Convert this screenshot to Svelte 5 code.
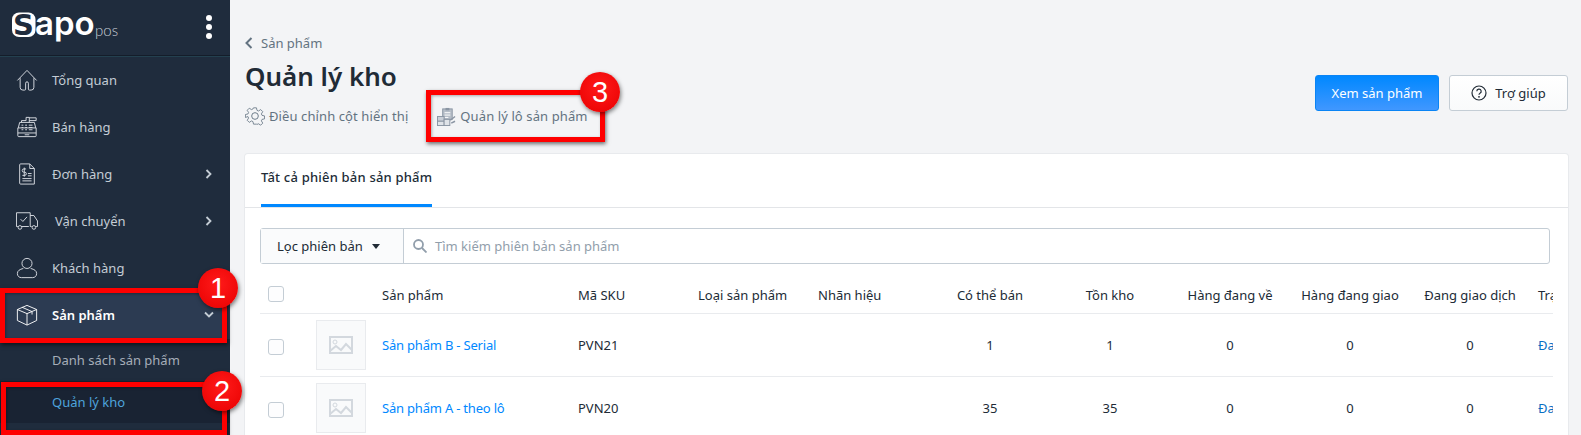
<script>
  const navItems = [
    { label: 'Tổng quan', icon: 'home' },
    { label: 'Bán hàng', icon: 'register' },
    { label: 'Đơn hàng', icon: 'order', arrow: true },
    { label: 'Vận chuyển', icon: 'truck', arrow: true, wide: true },
    { label: 'Khách hàng', icon: 'user' }
  ];
  const columns = ['Có thể bán', 'Tồn kho', 'Hàng đang về', 'Hàng đang giao', 'Đang giao dịch'];
  const rows = [
    { name: 'Sản phẩm B - Serial', sku: 'PVN21', nums: [1, 1, 0, 0, 0] },
    { name: 'Sản phẩm A - theo lô', sku: 'PVN20', nums: [35, 35, 0, 0, 0] }
  ];
</script>

<div class="page">
  <aside class="sidebar">
    <div class="brand">
      <svg class="logo" width="125" height="44" viewBox="0 0 125 44">
        <rect x="12" y="12.500" width="23.500" height="24.500" rx="7" fill="#fff" />
        <text x="23.500" y="35" class="logo-s" text-anchor="middle">S</text>
        <text x="35" y="35" class="logo-apo">apo</text>
        <text x="95" y="36" class="logo-pos">pos</text>
      </svg>
      <div class="dots"><i></i><i></i><i></i></div>
    </div>
    <nav>
      {#each navItems as item}
        <div class="nav-item">
          <svg class="nav-icon" width="24" height="24" viewBox="0 0 24 24">
            {#if item.icon === 'home'}
              <path d="M1.500 12.500 12 1.500l10.500 11M4.500 10v10a3 3 0 0 0 3 3h2a1 1 0 0 0 1-1v-6.500a1.500 1.500 0 0 1 3 0V22a1 1 0 0 0 1 1h2a3 3 0 0 0 3-3V10" />
            {:else if item.icon === 'register'}
              <path d="M2.500 13 4 7h16l1.500 6M2 13h20v8.500a1 1 0 0 1-1 1H3a1 1 0 0 1-1-1zM2 18.500h20M9.500 20.500h5M6 7V5h5V1.500h3.500V7M14.500 2H22v3h-7.500" />
              <path d="M6 10h2M10 10h2M14 10h4M6 12.500h2M10 12.500h2M14 12.500h4M6 15h2M10 15h2M14 15h4" />
            {:else if item.icon === 'order'}
              <path d="M5 1h10l5 5v17H5a1 1 0 0 1-1-1V2a1 1 0 0 1 1-1zM15 1v5h5" />
              <path d="M11 6.500H8.500a1.500 1.500 0 0 0 0 3.500h1a1.500 1.500 0 0 1 0 3.500H7M9 5v10M13 11.500h4M13 14h4M7 17h10M7 19.500h10" />
            {:else if item.icon === 'truck'}
              <path d="M14 18H6.500M2 18H.5V3h15v15M15.500 6h4l4 6v6H22M15.500 18h1.500" />
              <path d="M5 10l2.500 2.500L12 7.500" />
              <circle cx="4.300" cy="19" r="2" /><circle cx="19.500" cy="19" r="2" />
            {:else}
              <circle cx="12" cy="7" r="5.500" />
              <path d="M8 12.500c-4 1-6.500 2.500-6.500 5.500 0 3 2 4.500 4.500 4.500h12c2.500 0 4.500-1.500 4.500-4.500 0-3-2.500-4.500-6.500-5.500" />
            {/if}
          </svg>
          <span class="nav-label" class:wide={item.wide}>{item.label}</span>
          {#if item.arrow}
            <svg class="chevron" width="8" height="10" viewBox="0 0 8 10"><path d="M1.500 1l4 4-4 4" /></svg>
          {/if}
        </div>
      {/each}
      <div class="nav-item active">
        <svg class="nav-icon" width="24" height="24" viewBox="0 0 24 24">
          <path d="M12 1.500 22.500 6v12L12 23 1.500 18V6zM1.500 6 12 10.500 22.500 6M12 10.500V23M6.500 3.500 17.500 8.300v3.200" />
        </svg>
        <span class="nav-label">Sản phẩm</span>
        <svg class="chevron" width="10" height="8" viewBox="0 0 10 8"><path d="M1 1.500l4 4 4-4" /></svg>
      </div>
      <div class="sub-item">Danh sách sản phẩm</div>
      <div class="sub-item current">Quản lý kho</div>
    </nav>
  </aside>

  <main>
    <div class="back">
      <svg width="8" height="12" viewBox="0 0 8 12"><path d="M6.500 1 1.500 6l5 5" /></svg>
      <span>Sản phẩm</span>
    </div>
    <div class="head">
      <div>
        <h1>Quản lý kho</h1>
        <div class="actions">
          <span class="action">
            <svg class="gear" width="20" height="20" viewBox="0 0 24 24">
              <circle cx="12" cy="12" r="4" />
              <path d="M10 1h4l.7 3.400 2 .9 3-1.900 2.800 2.800-1.900 3 .9 2 3.400.7v4l-3.400.7-.9 2 1.900 3-2.800 2.800-3-1.900-2 .9L14 23h-4l-.7-3.400-2-.9-3 1.900-2.800-2.800 1.900-3-.9-2L-.9 14v-4l3.400-.7.9-2-1.900-3L4.300 1.500l3 1.900 2-.9z" transform="translate(1.300 1.300) scale(.89)" />
            </svg>
            Điều chỉnh cột hiển thị
          </span>
          <span class="action lot">
            <svg width="19" height="19" viewBox="0 0 20 20">
              <rect x="6" y="2" width="10" height="11" fill="#b6bec8" stroke="#8a95a3" />
              <rect x="9" y="1" width="4" height="2.500" fill="#8a95a3" />
              <path d="M8 6h6M8 8.500h6M8 11h4" stroke="#fff" />
              <rect x=".5" y="10" width="7" height="5" fill="#c9cfd7" stroke="#8a95a3" />
              <rect x=".5" y="15" width="7" height="4.500" fill="#dfe3e8" stroke="#8a95a3" />
              <rect x="7.500" y="13" width="6" height="6.500" fill="#dfe3e8" stroke="#8a95a3" />
              <path d="M14 14l5-4M15 17l4-2" stroke="#8a95a3" stroke-width="1.500" />
            </svg>
            Quản lý lô sản phẩm
          </span>
        </div>
      </div>
      <div class="buttons">
        <button class="primary">Xem sản phẩm</button>
        <button class="help">
          <svg width="16" height="16" viewBox="0 0 16 16">
            <circle cx="8" cy="8" r="7" />
            <path d="M5.800 6.200A2.200 2.200 0 1 1 9 8.200c-.7.400-1 .8-1 1.500" />
            <circle class="dot" cx="8" cy="11.800" r=".9" />
          </svg>
          Trợ giúp
        </button>
      </div>
    </div>

    <section class="card">
      <div class="tabs"><span class="tab">Tất cả phiên bản sản phẩm</span></div>
      <div class="body">
        <div class="filter">
          <div class="filter-btn">Lọc phiên bản <i class="caret"></i></div>
          <div class="search">
            <svg width="14" height="14" viewBox="0 0 14 14"><circle cx="5.500" cy="5.500" r="4.500" /><path d="m9 9 4.500 4.500" /></svg>
            <span>Tìm kiếm phiên bản sản phẩm</span>
          </div>
        </div>
        <div class="table">
          <div class="row header">
            <span class="check"></span>
            <span></span>
            <span>Sản phẩm</span>
            <span>Mã SKU</span>
            <span>Loại sản phẩm</span>
            <span>Nhãn hiệu</span>
            {#each columns as col}<span class="num">{col}</span>{/each}
            <span class="status">Trạng thái</span>
          </div>
          {#each rows as row}
            <div class="row">
              <span class="check"></span>
              <span class="thumb">
                <svg width="24" height="18" viewBox="0 0 24 18">
                  <path d="M1 1h22v16H1z" />
                  <circle cx="6" cy="6" r="2" />
                  <path d="M1 15l6-5 5 4 5-6 6 6" />
                </svg>
              </span>
              <span class="link">{row.name}</span>
              <span>{row.sku}</span>
              <span></span>
              <span></span>
              {#each row.nums as n}<span class="num">{n}</span>{/each}
              <span class="status link2">Đang giao dịch</span>
            </div>
          {/each}
        </div>
      </div>
    </section>
  </main>

  <div class="mark m1"></div>
  <div class="mark m2"></div>
  <div class="mark m3"></div>
  <div class="badge b1">1</div>
  <div class="badge b2">2</div>
  <div class="badge b3">3</div>
</div>

<style>
  :global(body) {
    margin: 0;
  }
  .page {
    position: relative;
    display: flex;
    width: 1581px;
    height: 435px;
    overflow: hidden;
    background: #f3f4f6;
    font-family: "Noto Sans", sans-serif;
    font-size: 13px;
    color: #212b36;
  }
  .sidebar {
    width: 230px;
    flex: none;
    background: #1f2c3d;
  }
  .brand {
    position: relative;
    height: 55px;
    border-bottom: 1px solid #141d2a;
    box-shadow: 0 1px 0 #23404f;
  }
  .logo {
    display: block;
  }
  .logo-s {
    font: 700 29px "DejaVu Sans", sans-serif;
    fill: #1f2c3d;
  }
  .logo-apo {
    font: 600 33px "Inter", sans-serif;
    fill: #fff;
  }
  .logo-pos {
    font: 300 15px "Lato", sans-serif;
    fill: #c9ced6;
  }
  .dots {
    position: absolute;
    top: 15px;
    left: 206px;
    display: flex;
    flex-direction: column;
    gap: 3px;
  }
  .dots i {
    width: 6px;
    height: 6px;
    border-radius: 50%;
    background: #fff;
  }
  .nav-item {
    display: flex;
    align-items: center;
    height: 47px;
    padding-left: 16px;
    color: #c4cdd5;
    position: relative;
  }
  .nav-icon {
    width: 22px;
    height: 22px;
    flex: none;
  }
  .nav-icon path, .nav-icon circle {
    fill: none;
    stroke: #dfe3e8;
    stroke-width: 1;
  }
  .nav-label {
    margin-left: 14px;
  }
  .nav-label.wide {
    margin-left: 17px;
  }
  .chevron {
    position: absolute;
    left: 205px;
    top: 19px;
  }
  .chevron path {
    fill: none;
    stroke: #c4cdd5;
    stroke-width: 1.800;
  }
  .active {
    height: 48px;
    background: #2c3b52;
    color: #fff;
    font-weight: 600;
  }
  .active .nav-icon path {
    stroke: #fff;
  }
  .active .chevron {
    left: 204px;
    top: 20px;
  }
  .sub-item {
    height: 42px;
    line-height: 42px;
    padding-left: 52px;
    color: #a6aeb9;
  }
  .sub-item.current {
    color: #4ea3dc;
    background: #192333;
  }
  main {
    flex: 1;
    min-width: 0;
    padding: 34px 13px 0 15px;
  }
  .back {
    display: flex;
    align-items: center;
    gap: 8px;
    height: 18px;
    color: #637381;
  }
  .back svg path {
    fill: none;
    stroke: #637381;
    stroke-width: 2;
  }
  .head {
    display: flex;
    justify-content: space-between;
    align-items: flex-start;
    margin-top: 1px;
  }
  h1 {
    margin: 0;
    height: 48px;
    line-height: 46px;
    font-size: 26px;
    font-weight: 600;
    color: #212b36;
  }
  .actions {
    display: flex;
    align-items: center;
    height: 30px;
    color: #637381;
  }
  .action {
    display: flex;
    align-items: center;
    gap: 4px;
    letter-spacing: .1px;
  }
  .gear circle, .gear path {
    fill: none;
    stroke: #637381;
    stroke-width: 1.100;
  }
  .lot {
    margin-left: 29px;
  }
  .buttons {
    display: flex;
    gap: 10px;
    padding-top: 22px;
  }
  button {
    height: 36px;
    border-radius: 3px;
    font: inherit;
    padding: 0;
  }
  .primary {
    width: 124px;
    color: #fff;
    border: 1px solid #0a84f5;
    background: linear-gradient(#0088ff, #4097ff);
  }
  .help {
    width: 119px;
    border: 1px solid #c4cdd5;
    background: linear-gradient(#fff, #f9fafb);
    color: #212b36;
    display: flex;
    align-items: center;
    justify-content: center;
    gap: 8px;
  }
  .help svg circle, .help svg path {
    fill: none;
    stroke: #212b36;
    stroke-width: 1.200;
  }
  .help svg .dot {
    fill: #212b36;
    stroke: none;
  }
  .card {
    margin-top: 23px;
    height: 300px;
    background: #fff;
    border-radius: 3px;
    box-shadow: 0 0 0 1px #e8eaed;
  }
  .tabs {
    height: 53px;
    padding-left: 16px;
    border-bottom: 1px solid #e3e5e8;
  }
  .tab {
    display: inline-block;
    height: 50px;
    line-height: 47px;
    border-bottom: 3px solid #0088ff;
    font-weight: 500;
    letter-spacing: .2px;
  }
  .body {
    padding: 20px 0 0 15px;
    overflow: hidden;
  }
  .filter {
    display: flex;
    width: 1290px;
    height: 36px;
    box-sizing: border-box;
    border: 1px solid #c4cdd5;
    border-radius: 3px;
  }
  .filter-btn {
    display: flex;
    align-items: center;
    width: 143px;
    flex: none;
    padding-left: 16px;
    box-sizing: border-box;
    border-right: 1px solid #c4cdd5;
    background: #fafbfc;
  }
  .caret {
    width: 0;
    height: 0;
    margin-left: 9px;
    border: 4px solid transparent;
    border-top: 5px solid #212b36;
    border-bottom: 0;
  }
  .search {
    display: flex;
    align-items: center;
    gap: 8px;
    padding-left: 9px;
    color: #919eab;
  }
  .search svg circle, .search svg path {
    fill: none;
    stroke: #919eab;
    stroke-width: 1.800;
  }
  .table {
    width: 1293px;
    overflow: hidden;
  }
  .row {
    display: grid;
    grid-template-columns: 56px 66px 196px 120px 120px 112px repeat(5, 120px) 200px;
    align-items: center;
    height: 63px;
    box-sizing: border-box;
    border-bottom: 1px solid #e9ebee;
  }
  .header {
    height: 50px;
    padding-top: 12px;
  }
  .check {
    width: 16px;
    height: 16px;
    margin: 3px 0 0 8px;
    box-sizing: border-box;
    border: 1px solid #c4cdd5;
    border-radius: 3px;
    background: #fdfdfe;
  }
  .header .check {
    margin-top: -2px;
  }
  .thumb {
    display: flex;
    align-items: center;
    justify-content: center;
    width: 50px;
    height: 50px;
    box-sizing: border-box;
    border: 1px solid #e9ebee;
    background: #f9fafb;
  }
  .thumb svg path, .thumb svg circle {
    fill: none;
    stroke: #d3d8de;
    stroke-width: 2;
  }
  .thumb svg circle {
    stroke-width: 1;
  }
  .link {
    color: #0088ff;
    letter-spacing: -.2px;
  }
  .num {
    text-align: center;
  }
  .status {
    padding-left: 8px;
    white-space: nowrap;
  }
  .link2 {
    color: #0a6fc4;
  }
  .mark {
    position: absolute;
    box-sizing: border-box;
    border: 5px solid #f00;
    box-shadow: 1px 2px 4px rgba(0, 0, 0, .55), inset 1px 1px 3px rgba(0, 0, 0, .3);
  }
  .m1 {
    left: 0;
    top: 288px;
    width: 227px;
    height: 55px;
  }
  .m2 {
    left: 1px;
    top: 382px;
    width: 226px;
    height: 53px;
  }
  .m3 {
    left: 426px;
    top: 90px;
    width: 179px;
    height: 52px;
  }
  .badge {
    position: absolute;
    width: 40px;
    height: 40px;
    border-radius: 50%;
    background: radial-gradient(circle at 50% 40%, #ff1a1a, #e80000);
    box-shadow: 1px 2px 4px rgba(0, 0, 0, .5);
    color: #fff;
    font: 400 29px/40px "Liberation Sans", sans-serif;
    text-align: center;
  }
  .b1 {
    left: 198px;
    top: 268px;
  }
  .b2 {
    left: 202px;
    top: 371px;
  }
  .b3 {
    left: 580px;
    top: 72px;
  }
</style>
